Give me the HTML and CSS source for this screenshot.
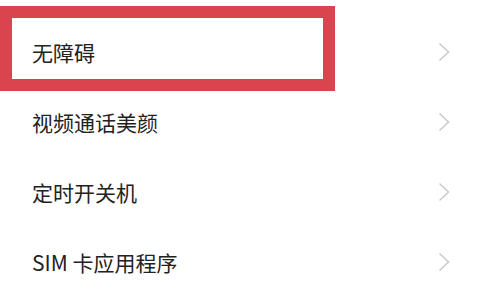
FILE: index.html
```html
<!DOCTYPE html>
<html lang="zh-CN">
<head>
  <meta charset="UTF-8" />
  <title>设置</title>
  <link rel="stylesheet" href="styles.css">
</head>
<body>
  <ul class="menu">
    <li class="row">
      <span class="label">无障碍</span>
      <svg class="chev" viewBox="0 0 12 20" width="12" height="20"><path d="M1.5 1.5 L10.5 10 L1.5 18.5"/></svg>
      <div class="highlight"></div>
    </li>
    <li class="row">
      <span class="label">视频通话美颜</span>
      <svg class="chev" viewBox="0 0 12 20" width="12" height="20"><path d="M1.5 1.5 L10.5 10 L1.5 18.5"/></svg>
    </li>
    <li class="row">
      <span class="label">定时开关机</span>
      <svg class="chev" viewBox="0 0 12 20" width="12" height="20"><path d="M1.5 1.5 L10.5 10 L1.5 18.5"/></svg>
    </li>
    <li class="row">
      <span class="label">SIM 卡应用程序</span>
      <svg class="chev" viewBox="0 0 12 20" width="12" height="20"><path d="M1.5 1.5 L10.5 10 L1.5 18.5"/></svg>
    </li>
  </ul>
</body>
</html>
```

FILE: styles.css
```css
body {
  margin: 0;
  background: #ffffff;
  font-family: "Noto Sans CJK SC", "Noto Sans", sans-serif;
  overflow: hidden;
}
.menu {
  list-style: none;
  margin: 0;
  padding: 17px 0 0 0;
}
.row {
  position: relative;
  height: 70px;
  display: flex;
  align-items: center;
  justify-content: space-between;
  padding: 0 30px 0 32px;
}
.label {
  font-size: 21px;
  color: #222222;
  line-height: 1;
}
.chev {
  fill: none;
  stroke: #c9c9c9;
  stroke-width: 1.5;
}
.highlight {
  position: absolute;
  left: 0;
  top: -11px;
  width: 311px;
  height: 61px;
  border: 12px solid #d9444f;
}
```
